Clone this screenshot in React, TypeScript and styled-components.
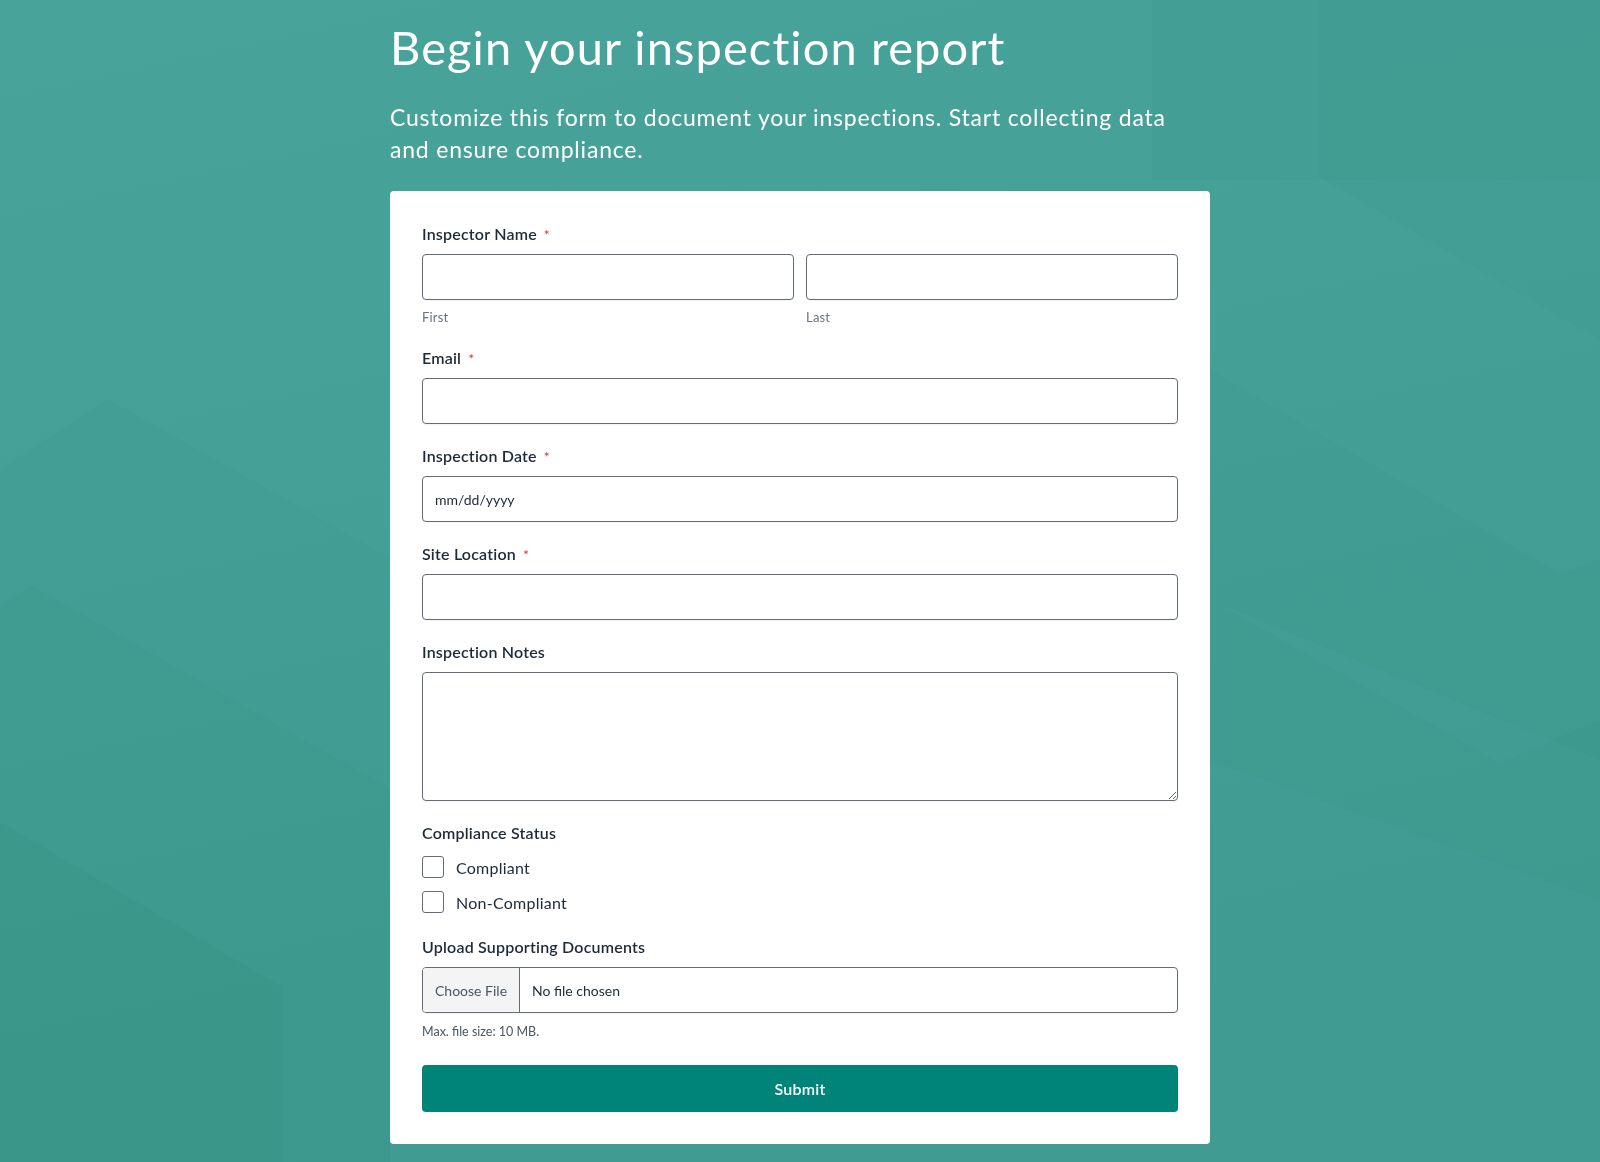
import styled, { createGlobalStyle } from "styled-components";

const GlobalStyle = createGlobalStyle`
  html, body {
    margin: 0;
    padding: 0;
    background-color: #44a097;
  }
  * {
    box-sizing: border-box;
  }
`;

const Backdrop = styled.svg`
  position: fixed;
  inset: 0;
  width: 100vw;
  height: 100vh;
  z-index: 0;
`;

const Page = styled.div`
  position: relative;
  z-index: 1;
  min-height: 100vh;
  padding: 20px 0 18px;
  font-family: "Lato", "Noto Sans", sans-serif;
`;

const Container = styled.div`
  width: 820px;
  margin: 0 auto;
`;

const Title = styled.h1`
  margin: 0;
  color: #ffffff;
  font-size: 47px;
  font-weight: 400;
  letter-spacing: 1.1px;
  line-height: 55px;
`;

const Intro = styled.p`
  max-width: 800px;
  margin: 26px 0 26px;
  color: #ffffff;
  font-size: 23px;
  font-weight: 400;
  letter-spacing: 0.8px;
  line-height: 32px;
`;

const Card = styled.form`
  background-color: #ffffff;
  border-radius: 4px;
  padding: 33px 32px 32px;
  display: flex;
  flex-direction: column;
`;

const Field = styled.div<{ $gap?: number }>`
  display: flex;
  flex-direction: column;
  margin-bottom: ${(p) => p.$gap ?? 22}px;
`;

const Label = styled.label`
  display: block;
  font-size: 16px;
  line-height: 20px;
  font-weight: 600;
  letter-spacing: 0.2px;
  color: #1d2a3a;
  margin-bottom: 10px;
`;

const Required = styled.span`
  color: #d63637;
  font-size: 14px;
  line-height: 1;
  font-weight: 400;
  margin-left: 7px;
`;

const NameRow = styled.div`
  display: grid;
  grid-template-columns: 1fr 1fr;
  column-gap: 12px;
`;

const SubLabel = styled.span`
  display: block;
  margin-top: 8px;
  font-size: 13px;
  line-height: 18px;
  letter-spacing: 0.2px;
  color: #6b7280;
`;

const TextInput = styled.input<{ $darkHint?: boolean }>`
  width: 100%;
  height: 46px;
  padding: 0 12px;
  border: 1px solid #646b7a;
  border-radius: 4px;
  background: #ffffff;
  box-shadow: 0 1px 2px rgba(16, 24, 40, 0.05);
  font-family: inherit;
  font-size: 14px;
  color: #1d2a3a;
  outline: none;
  &::placeholder {
    color: ${(p) => (p.$darkHint ? "#1d2a3a" : "#9ca3af")};
  }
`;

const TextArea = styled.textarea`
  width: 100%;
  height: 129px;
  padding: 10px 12px;
  border: 1px solid #646b7a;
  border-radius: 4px;
  box-shadow: 0 1px 2px rgba(16, 24, 40, 0.05);
  font-family: inherit;
  font-size: 14px;
  resize: vertical;
  outline: none;
  display: block;
`;

const Options = styled.div`
  display: flex;
  flex-direction: column;
  gap: 7px;
`;

const Option = styled.label`
  display: flex;
  align-items: center;
  height: 28px;
  font-size: 16px;
  letter-spacing: 0.25px;
  color: #1d2a3a;
`;

const Box = styled.input`
  appearance: none;
  width: 22px;
  height: 22px;
  margin: 0 12px 0 0;
  border: 1px solid #646b7a;
  border-radius: 3px;
  background: #ffffff;
`;

const FileBox = styled.label`
  display: flex;
  align-items: stretch;
  height: 46px;
  border: 1px solid #646b7a;
  border-radius: 4px;
  overflow: hidden;
  box-shadow: 0 1px 2px rgba(16, 24, 40, 0.05);
  font-size: 14px;
  input {
    display: none;
  }
`;

const ChooseButton = styled.span`
  display: flex;
  align-items: center;
  padding: 0 12px;
  background-color: #f4f4f5;
  border-right: 1px solid #646b7a;
  color: #4b5563;
`;

const FileName = styled.span`
  display: flex;
  align-items: center;
  padding: 0 12px;
  color: #1d2a3a;
`;

const Note = styled.span`
  display: block;
  margin-top: 10px;
  font-size: 12.5px;
  line-height: 18px;
  color: #4b5563;
`;

const SubmitButton = styled.button`
  height: 47px;
  margin-top: 2px;
  border: none;
  border-radius: 4px;
  background-color: #00847a;
  color: #ffffff;
  font-family: inherit;
  font-size: 16px;
  font-weight: 600;
  letter-spacing: 0.2px;
  cursor: pointer;
`;

function Background() {
  return (
    <Backdrop viewBox="0 0 1600 1162" preserveAspectRatio="none">
      <defs>
        <linearGradient id="bg" x1="0" y1="0" x2="0.3" y2="1">
          <stop offset="0" stopColor="#48a39b" />
          <stop offset="1" stopColor="#409b92" />
        </linearGradient>
      </defs>
      <rect width="1600" height="1162" fill="url(#bg)" />
      <g fill="#1f6f66" fillOpacity="0.045">
        <polygon points="0,470 107,399 390,558 390,1162 0,1162" />
        <polygon points="0,605 32,586 390,789 390,1162 0,1162" />
        <polygon points="0,822 282,987 282,1162 0,1162" />
        <polygon points="1152,0 1600,0 1600,180 1152,180" />
        <polygon points="1318,0 1600,0 1600,340 1318,176" />
        <polygon points="1210,370 1560,574 1600,559 1600,760 1210,600" />
        <polygon points="1210,600 1500,763 1600,720 1600,900 1210,760" />
      </g>
    </Backdrop>
  );
}

export default function App() {
  return (
    <>
      <GlobalStyle />
      <Background />
      <Page>
        <Container>
          <Title>Begin your inspection report</Title>
          <Intro>
            Customize this form to document your inspections. Start collecting data
            and ensure compliance.
          </Intro>
          <Card onSubmit={(e) => e.preventDefault()}>
            <Field>
              <Label>
                Inspector Name<Required>*</Required>
              </Label>
              <NameRow>
                <div>
                  <TextInput type="text" />
                  <SubLabel>First</SubLabel>
                </div>
                <div>
                  <TextInput type="text" />
                  <SubLabel>Last</SubLabel>
                </div>
              </NameRow>
            </Field>
            <Field>
              <Label>
                Email<Required>*</Required>
              </Label>
              <TextInput type="email" />
            </Field>
            <Field>
              <Label>
                Inspection Date<Required>*</Required>
              </Label>
              <TextInput type="text" placeholder="mm/dd/yyyy" $darkHint />
            </Field>
            <Field>
              <Label>
                Site Location<Required>*</Required>
              </Label>
              <TextInput type="text" />
            </Field>
            <Field>
              <Label>Inspection Notes</Label>
              <TextArea />
            </Field>
            <Field $gap={21}>
              <Label>Compliance Status</Label>
              <Options>
                <Option>
                  <Box type="checkbox" />
                  Compliant
                </Option>
                <Option>
                  <Box type="checkbox" />
                  Non-Compliant
                </Option>
              </Options>
            </Field>
            <Field>
              <Label>Upload Supporting Documents</Label>
              <FileBox>
                <input type="file" />
                <ChooseButton>Choose File</ChooseButton>
                <FileName>No file chosen</FileName>
              </FileBox>
              <Note>Max. file size: 10 MB.</Note>
            </Field>
            <SubmitButton type="submit">Submit</SubmitButton>
          </Card>
        </Container>
      </Page>
    </>
  );
}
